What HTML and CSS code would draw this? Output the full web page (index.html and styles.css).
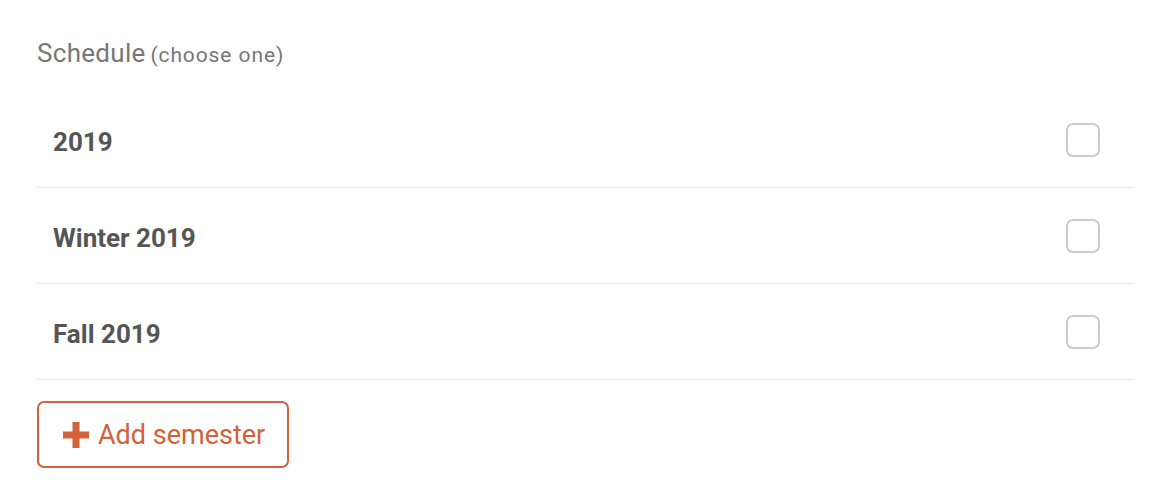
FILE: index.html
```html
<!DOCTYPE html>
<html lang="en">
<head>
    <meta charset="UTF-8">
    <meta name="viewport" content="width=device-width, initial-scale=1.0">
    <title>Schedule</title>
    <link rel="stylesheet" href="styles.css">
</head>
<body>
    <div class="schedule">
        <h2 class="titulo">Schedule <span class="nota">(choose one)</span></h2>

        <ul class="lista">
            <li class="fila">
                <span class="nombre">2019</span>
                <input type="checkbox" class="check">
            </li>
            <li class="fila">
                <span class="nombre">Winter 2019</span>
                <input type="checkbox" class="check">
            </li>
            <li class="fila">
                <span class="nombre">Fall 2019</span>
                <input type="checkbox" class="check">
            </li>
        </ul>

        <button class="agregar">
            <svg class="mas" width="26" height="26" viewBox="0 0 26 26">
                <path d="M9.5 0h7v9.5H26v7h-9.5V26h-7v-9.5H0v-7h9.5z" fill="#d3613a"/>
            </svg>
            Add semester
        </button>
    </div>
</body>
</html>
```

FILE: styles.css
```css
body {
    margin: 0;
    background: white;
    font-family: 'Roboto', 'Liberation Sans', sans-serif;
    color: #555;
}
.schedule {
    padding: 36px 30px 0 37px;
}
.titulo {
    margin: 0;
    font-size: 26px;
    font-weight: 400;
    color: #777;
    line-height: 34px;
    letter-spacing: 0.3px;
    word-spacing: -2px;
}
.nota {
    font-size: 21px;
    letter-spacing: 0.9px;
    word-spacing: 0;
}
.lista {
    list-style: none;
    margin: 20px 0 0 0;
    padding: 0;
}
.fila {
    display: flex;
    align-items: center;
    justify-content: space-between;
    height: 95px;
    padding: 0 32px 0 16px;
    border-bottom: 1px solid #e8e8e8;
}
.nombre {
    font-size: 26px;
    font-weight: 700;
    color: #555;
    padding-top: 4px;
}
.check {
    appearance: none;
    width: 34px;
    height: 34px;
    margin: 0;
    border: 2px solid #ccc;
    border-radius: 7px;
    box-sizing: border-box;
}
.agregar {
    display: flex;
    align-items: center;
    gap: 9px;
    margin-top: 21px;
    height: 67px;
    padding: 0 22px 0 24px;
    background: white;
    border: 2px solid #d3613a;
    border-radius: 7px;
    color: #d3613a;
    font-family: inherit;
    font-size: 27px;
    cursor: pointer;
}
```
